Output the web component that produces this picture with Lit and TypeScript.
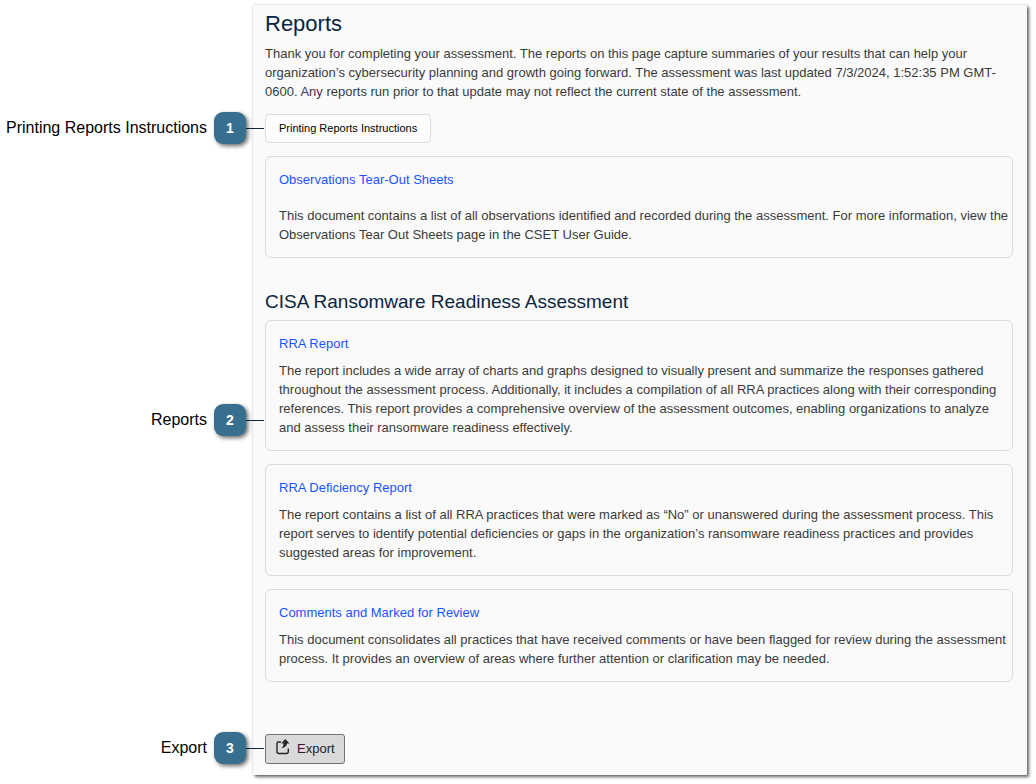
import { LitElement, html, css } from "lit";
import { customElement, property } from "lit/decorators.js";

interface Report {
  title: string;
  text: string;
}

const REPORTS: Report[] = [
  {
    title: "RRA Report",
    text: "The report includes a wide array of charts and graphs designed to visually present and summarize the responses gathered throughout the assessment process. Additionally, it includes a compilation of all RRA practices along with their corresponding references. This report provides a comprehensive overview of the assessment outcomes, enabling organizations to analyze and assess their ransomware readiness effectively.",
  },
  {
    title: "RRA Deficiency Report",
    text: "The report contains a list of all RRA practices that were marked as “No” or unanswered during the assessment process. This report serves to identify potential deficiencies or gaps in the organization’s ransomware readiness practices and provides suggested areas for improvement.",
  },
  {
    title: "Comments and Marked for Review",
    text: "This document consolidates all practices that have received comments or have been flagged for review during the assessment process. It provides an overview of areas where further attention or clarification may be needed.",
  },
];

// Numbered label that hangs to the left of the element it explains.
@customElement("call-out")
export class CallOut extends LitElement {
  @property({ type: Number }) number = 1;
  @property() label = "";

  static styles = css`
    :host {
      position: absolute;
      right: 100%;
      top: -2px;
      display: flex;
      align-items: center;
      white-space: nowrap;
    }
    .label {
      margin-right: 7px;
      color: #000;
      font: 16px/22px "Liberation Sans", Arial, sans-serif;
    }
    .badge {
      width: 32px;
      height: 32px;
      border-radius: 9px;
      background: #386f8e;
      box-shadow: 2px 2px 4px rgba(0, 0, 0, 0.6);
      color: #fff;
      font: bold 14px/32px "Liberation Sans", Arial, sans-serif;
      text-align: center;
    }
    .line {
      width: 18px;
      height: 1px;
      margin-right: 1px;
      background: #0a2a3c;
    }
  `;

  render() {
    return html`<span class="label">${this.label}</span><span class="badge">${this.number}</span><span class="line"></span>`;
  }
}

@customElement("app-root")
export class AppRoot extends LitElement {
  static styles = css`
    :host {
      display: block;
      background: #fff;
      color: #3a3a3a;
      font: 13px/19px "Liberation Sans", Arial, sans-serif;
    }
    * {
      box-sizing: border-box;
    }
    .page {
      padding: 5px 0 9px;
    }
    .panel {
      margin: 0 9px 0 253px;
      padding: 6px 14px 11px 12px;
      background: #fafafa;
      box-shadow: 2px 2px 3px rgba(0, 0, 0, 0.6), 0 0 2px rgba(0, 0, 0, 0.2);
    }
    h1,
    h2 {
      margin: 0;
      color: #0a2540;
      font-weight: 400;
    }
    h1 {
      font-size: 22px;
      line-height: 26px;
    }
    h2 {
      margin: 32px 0 6px;
      font-size: 19px;
      line-height: 24px;
    }
    p {
      margin: 8px 0 0;
    }
    h1 + p {
      margin-top: 7px;
    }
    .anchor {
      position: relative;
    }
    .print-row {
      display: flex;
      width: fit-content;
      margin: 13px 0;
    }
    button {
      margin: 0;
      font-family: inherit;
      cursor: pointer;
    }
    .print {
      height: 29px;
      padding: 0 13px 2px;
      border: 1px solid #dcdcdc;
      border-radius: 4px;
      background: #fcfcfc;
      color: #000;
      font-size: 11px;
    }
    .card {
      padding: 13px 2px 13px 13px;
      border: 1px solid #dcdcdc;
      border-radius: 6px;
    }
    .card a {
      display: block;
      width: fit-content;
      color: #1a53ff;
      text-decoration: none;
    }
    .spaced p {
      margin-top: 17px;
    }
    .list {
      display: flex;
      flex-direction: column;
      gap: 13px;
    }
    .low {
      top: 83px;
      right: calc(100% + 1px);
    }
    .export-row {
      display: flex;
      width: fit-content;
      margin-top: 52px;
    }
    .export {
      display: flex;
      align-items: center;
      gap: 6px;
      height: 30px;
      padding: 0 9px 2px;
      border: 1px solid #6c757d;
      border-radius: 3px;
      background: #d9d9d9;
      color: #212529;
      font-size: 13px;
    }
    .icon {
      width: 16px;
      height: 20px;
    }
  `;

  private card(report: Report, index: number) {
    return html`
      <article class="card anchor">
        ${index === 0 ? html`<call-out class="low" .number=${2} label="Reports"></call-out>` : ""}
        <a href="#">${report.title}</a>
        <p>${report.text}</p>
      </article>
    `;
  }

  render() {
    return html`
      <div class="page">
        <main class="panel">
          <h1>Reports</h1>
          <p>
            Thank you for completing your assessment. The reports on this page capture summaries of
            your results that can help your organization’s cybersecurity planning and growth going
            forward. The assessment was last updated 7/3/2024, 1:52:35 PM GMT-0600. Any reports run
            prior to that update may not reflect the current state of the assessment.
          </p>
          <div class="print-row anchor">
            <call-out .number=${1} label="Printing Reports Instructions"></call-out>
            <button class="print" type="button">Printing Reports Instructions</button>
          </div>
          <article class="card spaced">
            <a href="#">Observations Tear-Out Sheets</a>
            <p>
              This document contains a list of all observations identified and recorded during the
              assessment. For more information, view the Observations Tear Out Sheets page in the
              CSET User Guide.
            </p>
          </article>
          <h2>CISA Ransomware Readiness Assessment</h2>
          <section class="list">${REPORTS.map((report, index) => this.card(report, index))}</section>
          <div class="export-row anchor">
            <call-out .number=${3} label="Export"></call-out>
            <button class="export" type="button">
              <svg class="icon" viewBox="0 0 16 20" aria-hidden="true">
                <path
                  d="M6 4H3.500Q2 4 2 5.500V13.500Q2 15.500 4 15.500H11.500Q13.300 15.500 13.300 13.500V10.500"
                  fill="none"
                  stroke="#212529"
                  stroke-width="1.400"
                />
                <path d="M10.300 1L14.500 5.500H12Q11.700 9.300 6.500 10.200Q8.800 8.500 8.600 5.500H6.300Z" fill="#212529" />
              </svg>
              <span>Export</span>
            </button>
          </div>
        </main>
      </div>
    `;
  }
}
